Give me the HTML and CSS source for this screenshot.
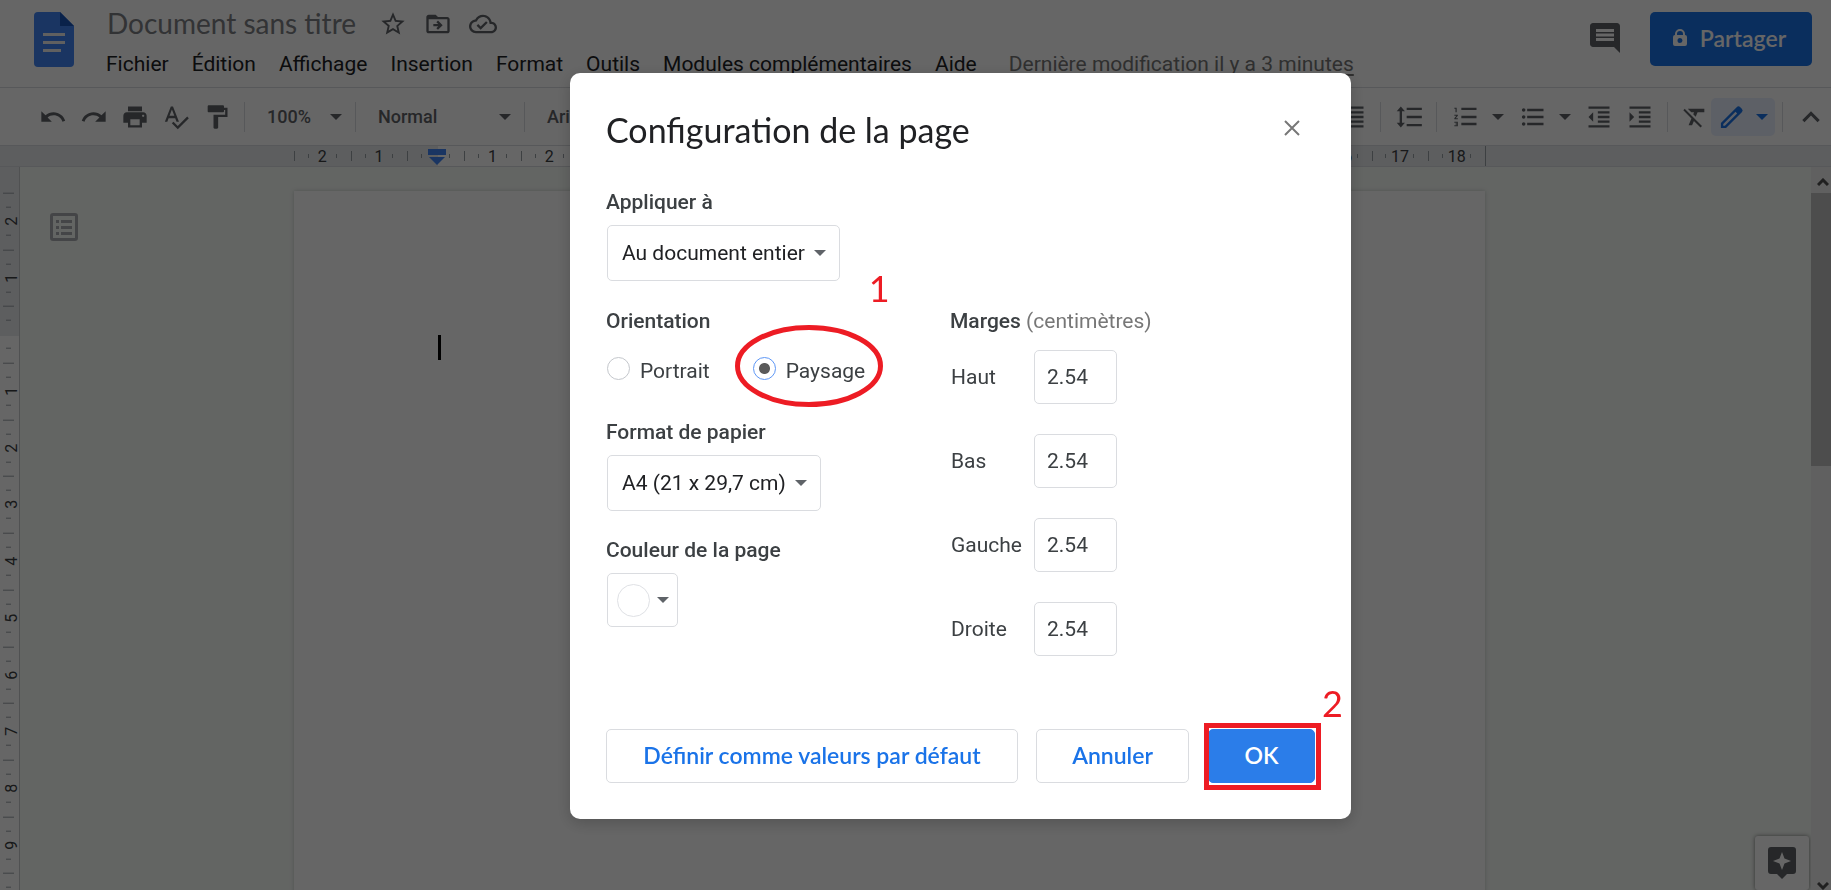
FILE: index.html
```html
<!DOCTYPE html>
<html lang="fr">
<head>
<meta charset="utf-8">
<title>Document sans titre</title>
<link rel="stylesheet" href="styles.css">
</head>
<body>
<div class="app">
  <header class="header">
    <svg class="logo" viewBox="0 0 40 55" aria-hidden="true"><path fill="#4285f4" d="M4 0h22l14 14v37a4 4 0 0 1-4 4H4a4 4 0 0 1-4-4V4a4 4 0 0 1 4-4z"/><path fill="#1a55b8" d="M26 0l14 14H26z"/><path fill="#f1f1f1" d="M9 21h22v3H9zM9 29h22v3H9zM9 37h18v3H9z"/></svg>
    <div class="heading">
      <div class="title-row">
        <h1 class="doc-title">Document sans titre</h1>
        <button class="icon-btn" aria-label="Suivre"><svg class="icon" viewBox="0 0 24 24"><path d="M22 9.24l-7.19-.62L12 2 9.19 8.63 2 9.24l5.46 4.73L5.82 21 12 17.27 18.18 21l-1.63-7.03L22 9.24zM12 15.4l-3.76 2.27 1-4.28-3.32-2.88 4.38-.38L12 6.1l1.71 4.04 4.38.38-3.32 2.88 1 4.28L12 15.4z"/></svg></button>
        <button class="icon-btn" aria-label="Déplacer"><svg class="icon" viewBox="0 0 24 24"><path d="M20 6h-8l-2-2H4c-1.1 0-2 .9-2 2v12c0 1.1.9 2 2 2h16c1.1 0 2-.9 2-2V8c0-1.1-.9-2-2-2zm0 12H4V8h16v10zm-8-1l4-4-4-4-1.400 1.400L12.200 12H8v2h4.200l-1.600 1.600z"/></svg></button>
        <button class="icon-btn" aria-label="État du document"><svg class="icon" viewBox="0 0 24 24"><path d="M19.35 10.04C18.67 6.59 15.64 4 12 4 9.11 4 6.6 5.640 5.350 8.040 2.340 8.360 0 10.910 0 14c0 3.310 2.690 6 6 6h13c2.760 0 5-2.240 5-5 0-2.640-2.050-4.780-4.650-4.960zM19 18H6c-2.210 0-4-1.790-4-4 0-2.050 1.530-3.760 3.560-3.970l1.070-.11.5-.95C8.080 7.140 9.940 6 12 6c2.620 0 4.880 1.860 5.390 4.430l.3 1.500 1.530.11c1.560.1 2.780 1.410 2.780 2.960 0 1.650-1.350 3-3 3zm-9-3.820l-2.090-2.090L6.500 13.500 10 17l6.010-6.010-1.410-1.410z"/></svg></button>
      </div>
      <nav class="menus">
        <button class="menu">Fichier</button><button class="menu">Édition</button><button class="menu">Affichage</button><button class="menu">Insertion</button><button class="menu">Format</button><button class="menu">Outils</button><button class="menu">Modules complémentaires</button><button class="menu">Aide</button>
        <a class="last-edit" href="#">Dernière modification il y a 3 minutes</a>
      </nav>
    </div>
    <button class="icon-btn comments" aria-label="Commentaires"><svg class="icon-lg" viewBox="0 0 24 24"><path d="M21.990 4c0-1.100-.89-2-1.990-2H4c-1.100 0-2 .9-2 2v12c0 1.100.9 2 2 2h14l4 4-.010-18zM18 14H6v-2h12v2zm0-3H6V9h12v2zm0-3H6V6h12v2z"/></svg></button>
    <button class="share"><svg class="lock" viewBox="0 0 14 18"><path fill-rule="evenodd" d="M2 6V5a5 5 0 0 1 10 0v1a2 2 0 0 1 2 2v7a2 2 0 0 1-2 2H2a2 2 0 0 1-2-2V8a2 2 0 0 1 2-2zm2 0h6V5a3 3 0 0 0-6 0zm3 3a2.500 2.500 0 1 0 0 5 2.500 2.500 0 0 0 0-5z"/></svg>Partager</button>
  </header>

  <div class="toolbar">
    <div class="tools">
      <button class="tool" aria-label="Annuler la saisie"><svg class="icon" viewBox="0 0 24 24"><path d="M12.500 8c-2.650 0-5.050.99-6.900 2.600L2 7v9h9l-3.620-3.620c1.390-1.160 3.160-1.880 5.120-1.880 3.540 0 6.550 2.310 7.600 5.500l2.370-.78C21.080 11.030 17.150 8 12.500 8z"/></svg></button>
      <button class="tool" aria-label="Rétablir"><svg class="icon" viewBox="0 0 24 24"><path d="M18.400 10.600C16.550 8.990 14.150 8 11.500 8c-4.650 0-8.580 3.030-9.960 7.220L3.900 16c1.050-3.190 4.050-5.500 7.600-5.500 1.950 0 3.730.72 5.120 1.880L13 16h9V7l-3.600 3.600z"/></svg></button>
      <button class="tool" aria-label="Imprimer"><svg class="icon" viewBox="0 0 24 24"><path d="M19 8H5c-1.660 0-3 1.340-3 3v6h4v4h12v-4h4v-6c0-1.660-1.340-3-3-3zm-3 11H8v-5h8v5zm3-7c-.55 0-1-.45-1-1s.45-1 1-1 1 .45 1 1-.45 1-1 1zm-1-9H6v4h12V3z"/></svg></button>
      <button class="tool" aria-label="Orthographe"><svg class="icon" viewBox="0 0 24 24"><path d="M12.450 16h2.090L9.430 3H7.570L2.460 16h2.090l1.120-3h5.640l1.140 3zm-6.020-5L8.500 5.480 10.570 11H6.430zm15.160.59l-8.090 8.090L9.830 16l-1.410 1.410 5.090 5.090L23 13l-1.410-1.410z"/></svg></button>
      <button class="tool" aria-label="Reproduire la mise en forme"><svg class="icon" viewBox="0 0 24 24"><path d="M18 4V3c0-.55-.45-1-1-1H5c-.55 0-1 .45-1 1v4c0 .55.45 1 1 1h12c.55 0 1-.45 1-1V6h1v4H9v11c0 .55.45 1 1 1h2c.55 0 1-.45 1-1v-9h8V4h-3z"/></svg></button>
      <span class="sep"></span>
      <button class="drop zoom-drop">100%<span class="caret"></span></button>
      <span class="sep"></span>
      <button class="drop style-drop">Normal<span class="caret"></span></button>
      <span class="sep"></span>
      <button class="drop font-drop">Arial<span class="caret"></span></button>
    </div>
    <div class="tools">
      <button class="tool" aria-label="Justifier"><svg class="icon" viewBox="0 0 24 24"><path d="M3 21h18v-2H3v2zm0-4h18v-2H3v2zm0-4h18v-2H3v2zm0-4h18V7H3v2zm0-6v2h18V3H3z"/></svg></button>
      <span class="sep"></span>
      <button class="tool" aria-label="Interligne"><svg class="icon" viewBox="0 0 24 24"><path d="M6 7h2.500L5 3 1.500 7H4v10H1.500L5 21l3.500-4H6V7zm4-3v2h13V4H10zm0 16h13v-2H10v2zm0-7h13v-2H10v2z"/></svg></button>
      <span class="sep"></span>
      <button class="tool list" aria-label="Liste numérotée"><svg class="icon" viewBox="0 0 24 24"><path d="M2 17h2v.5H3v1h1v.5H2v1h3v-4H2v1zm1-9h1V4H2v1h1v3zm-1 3h1.800L2 13.100v.9h3v-1H3.200L5 10.900V10H2v1zm6-7v2h13V4H8zm0 15h13v-2H8v2zm0-6h13v-2H8v2z"/></svg></button>
      <button class="tool mini" aria-label="Options de liste numérotée"><span class="caret"></span></button>
      <button class="tool list" aria-label="Liste à puces"><svg class="icon" viewBox="0 0 24 24"><path d="M4 10.500c-.83 0-1.500.67-1.500 1.500s.67 1.500 1.500 1.500 1.500-.67 1.500-1.500-.67-1.500-1.500-1.500zm0-6c-.83 0-1.500.67-1.500 1.500S3.170 7.500 4 7.500 5.500 6.830 5.500 6 4.830 4.500 4 4.500zm0 12c-.83 0-1.500.68-1.500 1.500s.68 1.500 1.500 1.500 1.500-.68 1.500-1.500-.67-1.500-1.500-1.500zM7 19h14v-2H7v2zm0-6h14v-2H7v2zm0-8v2h14V5H7z"/></svg></button>
      <button class="tool mini" aria-label="Options de liste à puces"><span class="caret"></span></button>
      <button class="tool" aria-label="Diminuer le retrait"><svg class="icon" viewBox="0 0 24 24"><path d="M11 17h10v-2H11v2zm-8-5l4 4V8l-4 4zm0 9h18v-2H3v2zM3 3v2h18V3H3zm8 6h10V7H11v2zm0 4h10v-2H11v2z"/></svg></button>
      <button class="tool" aria-label="Augmenter le retrait"><svg class="icon" viewBox="0 0 24 24"><path d="M3 21h18v-2H3v2zM3 8v8l4-4-4-4zm8 9h10v-2H11v2zM3 3v2h18V3H3zm8 6h10V7H11v2zm0 4h10v-2H11v2z"/></svg></button>
      <span class="sep"></span>
      <button class="tool clear" aria-label="Supprimer la mise en forme"><svg class="icon" viewBox="0 0 24 24"><path d="M3.270 5L2 6.270l6.970 6.970L6.500 19h3l1.570-3.660L16.730 21 18 19.730 3.550 5.270 3.270 5zM6 5v.18L8.820 8h2.400l-.72 1.680 2.100 2.100L14.210 8H20V5H6z"/></svg></button>
      <button class="mode" aria-label="Mode édition"><svg class="icon" viewBox="0 0 24 24"><path fill-rule="evenodd" d="M20.400 4.900l-1.300-1.300a2.200 2.200 0 0 0-3.100 0L2.500 17.100V21.500h4.400L20.400 8a2.200 2.200 0 0 0 0-3.100zM5.900 19.500H4.500v-1.400L15 7.600 16.400 9z"/></svg><span class="caret"></span></button>
      <span class="sep"></span>
      <button class="tool" aria-label="Masquer les menus"><svg class="icon" viewBox="0 0 24 24"><path d="M12 7l-7.500 7.500 1.900 1.900 5.600-5.600 5.600 5.600 1.900-1.900z"/></svg></button>
    </div>
  </div>

  <div class="ruler-h">
    <div class="track-h">
      <span class="tick-h">2</span><span class="tick-h">1</span><span class="tick-h"></span><span class="tick-h">1</span><span class="tick-h">2</span><span class="tick-h">3</span><span class="tick-h">4</span><span class="tick-h">5</span><span class="tick-h">6</span><span class="tick-h">7</span><span class="tick-h">8</span><span class="tick-h">9</span><span class="tick-h">10</span><span class="tick-h">11</span><span class="tick-h">12</span><span class="tick-h">13</span><span class="tick-h">14</span><span class="tick-h">15</span><span class="tick-h">16</span><span class="tick-h">17</span><span class="tick-h">18</span>
      <svg class="indent" viewBox="0 0 18 16" aria-hidden="true"><path d="M0 0h18v6H0zM1 8h16l-8 8z"/></svg>
    </div>
  </div>

  <div class="workspace">
    <div class="ruler-v">
      <div class="track-v">
        <span class="tick-v">2</span><span class="tick-v">1</span><span class="tick-v"></span><span class="tick-v">1</span><span class="tick-v">2</span><span class="tick-v">3</span><span class="tick-v">4</span><span class="tick-v">5</span><span class="tick-v">6</span><span class="tick-v">7</span><span class="tick-v">8</span><span class="tick-v">9</span><span class="tick-v"></span>
      </div>
    </div>
    <main class="canvas">
      <button class="outline-btn" aria-label="Afficher le plan"><svg viewBox="0 0 28 28"><path fill-rule="evenodd" d="M3 0h22a3 3 0 0 1 3 3v22a3 3 0 0 1-3 3H3a3 3 0 0 1-3-3V3a3 3 0 0 1 3-3zm0 3v22h22V3zM6 7h3v3H6zm5 0h11v3H11zM6 13h3v3H6zm5 0h11v3H11zM6 19h3v3H6zm5 0h11v3H11z"/></svg></button>
      <div class="sheet"><div class="text-cursor"></div></div>
      <button class="explore" aria-label="Explorer"><svg viewBox="0 0 28 32"><path fill-rule="evenodd" d="M3 0h22a3 3 0 0 1 3 3v21a3 3 0 0 1-3 3h-6l-5 5-5-5H3a3 3 0 0 1-3-3V3a3 3 0 0 1 3-3zm11 5l-2.500 6.500L5 14l6.500 2.500L14 23l2.500-6.500L23 14l-6.500-2.500z"/></svg></button>
    </main>
    <div class="scrollbar">
      <svg class="scroll-arrow" viewBox="0 0 12 8"><path d="M1 7l5-5 5 5"/></svg>
      <div class="thumb"></div>
      <svg class="scroll-arrow down" viewBox="0 0 12 8"><path d="M1 1l5 5 5-5"/></svg>
    </div>
  </div>
</div>

<div class="backdrop">
  <form class="dialog" role="dialog" aria-labelledby="dlg-title">
    <div class="dialog-head">
      <h2 class="dialog-title" id="dlg-title">Configuration de la page</h2>
      <button type="button" class="close" aria-label="Fermer"><svg viewBox="0 0 16 16"><path d="M1 1l14 14M15 1L1 15"/></svg></button>
    </div>
    <div class="field">
      <label class="label" for="apply">Appliquer à</label>
      <div class="select"><select id="apply" class="select-apply"><option>Au document entier</option></select><span class="caret"></span></div>
    </div>
    <div class="columns">
      <div class="col">
        <fieldset class="orientation">
          <legend class="label">Orientation</legend>
          <div class="radios">
            <label class="radio"><input type="radio" name="orientation">Portrait</label>
            <label class="radio marked"><input type="radio" name="orientation" checked>Paysage
              <svg class="ellipse" viewBox="0 0 148 82" aria-hidden="true"><ellipse cx="74" cy="41" rx="71.500" ry="38.500"/></svg>
              <span class="step step-one">1</span></label>
          </div>
        </fieldset>
        <div class="field">
          <label class="label" for="paper">Format de papier</label>
          <div class="select"><select id="paper" class="select-paper"><option>A4 (21 x 29,7 cm)</option></select><span class="caret"></span></div>
        </div>
        <div class="field">
          <span class="label" id="color-label">Couleur de la page</span>
          <button type="button" class="color" aria-labelledby="color-label"><span class="swatch"></span><span class="caret"></span></button>
        </div>
      </div>
      <fieldset class="margins">
        <legend class="label">Marges <span class="unit">(centimètres)</span></legend>
        <div class="margin-grid">
          <label for="m-top">Haut</label><input id="m-top" type="text" value="2.54">
          <label for="m-bottom">Bas</label><input id="m-bottom" type="text" value="2.54">
          <label for="m-left">Gauche</label><input id="m-left" type="text" value="2.54">
          <label for="m-right">Droite</label><input id="m-right" type="text" value="2.54">
        </div>
      </fieldset>
    </div>
    <div class="actions">
      <button type="button" class="btn btn-default">Définir comme valeurs par défaut</button>
      <button type="button" class="btn btn-cancel">Annuler</button>
      <div class="ok-wrap"><button type="button" class="btn primary">OK</button><span class="frame"></span><span class="step step-two">2</span></div>
    </div>
  </form>
</div>
</body>
</html>
```

FILE: styles.css
```css
* { box-sizing: border-box; }
body { margin: 0; font-family: Roboto, "Liberation Sans", sans-serif; color: #202124; }
button { border: 0; padding: 0; background: none; font: inherit; color: inherit; cursor: pointer; }
fieldset { border: 0; margin: 0; padding: 0; min-width: 0; }
legend { padding: 0; }
svg { display: block; }

.app { display: flex; flex-direction: column; height: 100vh; overflow: hidden; background: #fff; }
.icon { width: 28px; height: 28px; fill: #5f6368; }
.icon-btn { display: flex; }
.caret { width: 0; height: 0; border: 6px solid transparent; border-top-color: currentColor; border-bottom: 0; }

/* Header */
.header { display: flex; align-items: flex-start; height: 88px; padding: 12px 19px 0 34px; border-bottom: 1px solid #dadce0; }
.logo { width: 40px; height: 55px; flex: none; }
.heading { flex: 1; margin-left: 32px; min-width: 0; }
.title-row { display: flex; align-items: center; height: 24px; gap: 17px; }
.doc-title { margin: 0 6px 0 1px; padding-bottom: 2px; font: 400 28px/24px Lato, sans-serif; color: #7d8084; white-space: nowrap; }
.menus { display: flex; align-items: center; gap: 23px; margin-top: 16px; font-size: 21px; line-height: 24px; white-space: nowrap; }
.last-edit { margin-left: 9px; color: #777; text-decoration: underline; text-underline-offset: 3px; }
.comments { margin: 8px 27px 0 0; }
.icon-lg { width: 36px; height: 36px; fill: #5f6368; }
.share { display: flex; align-items: center; justify-content: center; gap: 13px; width: 162px; height: 54px; padding: 0 3px 2px 0; border-radius: 5px; background: #1a73e8; color: #fff; font: 600 23px/24px Lato, sans-serif; }
.lock { width: 14px; height: 18px; fill: #fff; }

/* Toolbar */
.toolbar { display: flex; justify-content: space-between; height: 57px; flex: none; padding-left: 32px; }
.tools { display: flex; align-items: center; color: #5f6368; }
.tool { display: flex; align-items: center; justify-content: center; width: 41px; height: 38px; }
.tool.list { width: 36px; margin-left: 4px; }
.tool.clear { width: 36px; padding-left: 4px; }
.tool.mini { width: 27px; }
.sep { width: 1px; height: 30px; margin: 0 7px; background: #dadce0; }
.drop { display: flex; align-items: center; justify-content: space-between; height: 38px; font-size: 18px; font-weight: 500; }
.zoom-drop { width: 96px; padding: 0 6px 0 15px; }
.style-drop { width: 154px; padding: 0 6px 0 15px; }
.font-drop { width: 154px; padding: 0 6px 0 15px; }
.mode { display: flex; align-items: center; justify-content: center; gap: 10px; width: 64px; height: 38px; border-radius: 5px; background: #e8f0fe; color: #1a73e8; }
.mode .icon { fill: #1a73e8; }

/* Rulers */
.ruler-h { flex: none; height: 22px; padding-left: 294px; overflow: hidden; background: #e8eaed; border-top: 1px solid #dadce0; border-bottom: 1px solid #dadce0; }
.track-h { position: relative; display: grid; grid-template-columns: repeat(21, 1fr); width: 1192px; height: 20px; background: linear-gradient(#fff, #fff) 144px 0 / 904px 20px no-repeat; border-right: 1px solid #9aa0a6; font-size: 16px; line-height: 22px; text-align: center; color: #3c4043; }
.tick-h { background: linear-gradient(#9aa0a6, #9aa0a6) 0 5px / 1px 10px no-repeat, linear-gradient(#9aa0a6, #9aa0a6) 25% 8px / 1px 4px no-repeat, linear-gradient(#9aa0a6, #9aa0a6) 75% 8px / 1px 4px no-repeat; }
.indent { position: absolute; left: 134px; top: 3px; width: 18px; height: 16px; fill: #4285f4; }
.ruler-v { width: 20px; flex: none; padding-top: 26px; overflow: hidden; background: linear-gradient(#e8eaed, #e8eaed) 0 0 / 20px 169px no-repeat #fff; border-right: 1px solid #c8cacd; }
.track-v { display: grid; grid-template-rows: repeat(13, 1fr); height: 737px; font-size: 16px; line-height: 16px; color: #3c4043; }
.tick-v { display: flex; align-items: center; justify-content: center; width: 19px; padding-right: 4px; writing-mode: vertical-rl; transform: rotate(180deg); background: linear-gradient(#9aa0a6, #9aa0a6) 5px 100% / 11px 1px no-repeat, linear-gradient(#9aa0a6, #9aa0a6) 8px 25% / 5px 1px no-repeat, linear-gradient(#9aa0a6, #9aa0a6) 8px 75% / 5px 1px no-repeat; }

/* Document area */
.workspace { display: flex; flex: 1; min-height: 0; }
.canvas { position: relative; display: flex; justify-content: center; flex: 1; padding: 24px 52px 0 0; overflow: hidden; background: #f8fcf8; }
.outline-btn { position: absolute; left: 30px; top: 46px; width: 28px; height: 28px; fill: #aaadb1; }
.sheet { width: 1191px; height: 842px; flex: none; padding: 144px; background: #fff; box-shadow: 0 0 4px rgba(60, 64, 67, .25); }
.text-cursor { width: 3px; height: 25px; background: #000; }
.explore { position: absolute; right: 2px; bottom: 0; display: flex; align-items: center; justify-content: center; width: 54px; height: 54px; border-radius: 3px; background: #fff; box-shadow: 0 0 4px rgba(0, 0, 0, .5); fill: #5f6368; }
.explore svg { width: 28px; height: 32px; }
.scrollbar { display: flex; flex-direction: column; align-items: flex-end; width: 20px; flex: none; background: #f1f1f1; }
.scroll-arrow { flex: none; width: 12px; height: 8px; margin: 11px 2px 7px 0; fill: none; stroke: #505050; stroke-width: 3px; }
.scroll-arrow.down { margin: auto 2px 0 0; }
.thumb { width: 20px; height: 273px; background: #c1c1c1; }

/* Dialog */
.backdrop { position: fixed; inset: 0; display: flex; align-items: center; justify-content: center; padding: 2px 0 0 90px; background: rgba(0, 0, 0, .6); }
.dialog { width: 781px; padding: 35px 36px 36px; border-radius: 10px; background: #fff; box-shadow: 0 4px 16px rgba(0, 0, 0, .2); font-size: 21px; line-height: 24px; color: #3c4043; }
.dialog-head { display: flex; justify-content: space-between; align-items: flex-start; margin-bottom: 38px; }
.dialog-title { margin: 0; font: 400 34px/44px Lato, sans-serif; color: #202124; }
.close { margin: 12px 15px 0 0; }
.close svg { width: 16px; height: 16px; fill: none; stroke: #777; stroke-width: 2px; }
.field { display: flex; flex-direction: column; align-items: flex-start; gap: 11px; }
.label { font-weight: 500; }
.select { position: relative; display: flex; margin-left: 1px; color: #5f6368; }
.select .caret { position: absolute; right: 14px; top: 25px; pointer-events: none; }
.select select { appearance: none; height: 56px; padding: 0 34px 0 14px; border: 1px solid #dadce0; border-radius: 5px; background: #fff; font: inherit; color: #202124; }
.select-apply { width: 233px; }
.select-paper { width: 214px; }
.columns { display: flex; margin-top: 28px; }
.col { display: flex; flex-direction: column; gap: 27px; width: 344px; }
.radios { display: flex; gap: 43px; padding: 24px 0 8px 1px; }
.radio { display: flex; align-items: center; gap: 10px; line-height: 28px; }
.radio input { appearance: none; width: 23px; height: 23px; margin: 0 0 5px; border: 1px solid #c4c7cc; border-radius: 50%; background: #fff; }
.radio input:checked { border-color: #5e97f6; background: radial-gradient(circle, #5a5a5a 5px, #fff 6px); }
.marked { position: relative; }
.ellipse { position: absolute; left: -18px; top: -32px; width: 148px; height: 82px; fill: none; stroke: #ed1c24; stroke-width: 5px; }
.step { position: absolute; font: 400 36px/36px Lato, sans-serif; color: #ed1c24; }
.step-one { left: 116px; top: -87px; }
.color { display: flex; align-items: center; gap: 7px; width: 71px; height: 54px; margin-left: 1px; padding-left: 9px; border: 1px solid #dadce0; border-radius: 5px; color: #5f6368; }
.swatch { width: 33px; height: 33px; border: 1px solid #dfe1e5; border-radius: 50%; }
.unit { font-weight: 400; color: #777; }
.margin-grid { display: grid; grid-template-columns: 83px 83px; align-items: center; row-gap: 30px; padding: 17px 0 0 1px; }
.margin-grid input { width: 83px; height: 54px; padding: 0 12px; border: 1px solid #dadce0; border-radius: 5px; font: inherit; color: #3c4043; }
.actions { display: flex; margin-top: 73px; }
.btn { height: 54px; padding-bottom: 2px; border: 1px solid #dadce0; border-radius: 5px; font: 600 23px/24px Lato, sans-serif; color: #1a73e8; white-space: nowrap; }
.btn-default { width: 412px; margin-right: 18px; }
.btn-cancel { width: 153px; margin-right: 19px; }
.btn.primary { width: 107px; border-color: #2b7de9; background: #2b7de9; color: #fff; }
.ok-wrap { position: relative; }
.frame { position: absolute; left: -4px; top: -6px; width: 117px; height: 67px; border: 5px solid #ed1c24; pointer-events: none; }
.step-two { left: 114px; top: -44px; }
```
